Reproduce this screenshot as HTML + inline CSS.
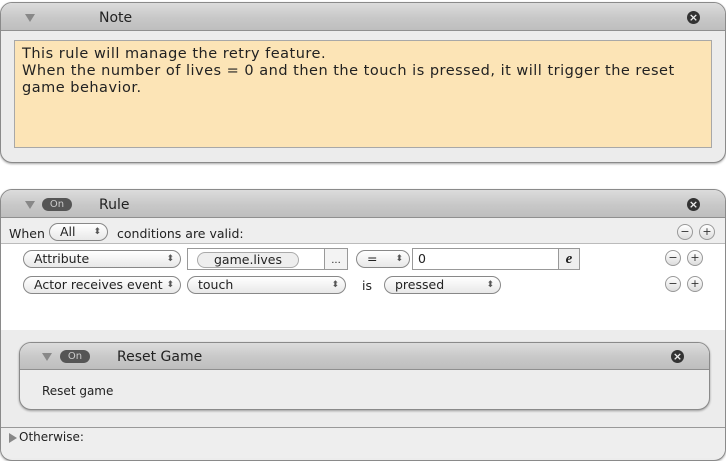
<!DOCTYPE html>
<html><head><style>
body{margin:0;width:726px;height:451px;background:#fff;font-family:"DejaVu Sans",sans-serif;font-size:12.5px;color:#222;position:relative;overflow:hidden}
.abs{position:absolute}
.panel{position:absolute;border:1px solid #8a8a8a;border-radius:12px;background:#ececec;box-shadow:0 1px 2px rgba(0,0,0,.35);overflow:hidden}
.hdr{position:absolute;left:0;right:0;top:0;height:27px;background:linear-gradient(#dcdcdc,#c8c8c8 55%,#bebebe);border-bottom:1px solid #8f8f8f}
.tri{position:absolute;width:0;height:0;border-left:5px solid transparent;border-right:5px solid transparent;border-top:8px solid #888}
.title{position:absolute;font-size:14px;color:#222}
.on{position:absolute;width:30px;height:13px;border-radius:7px;background:#555;color:#ccc;font-size:10px;text-align:center;line-height:13px}
.x{position:absolute;width:13px;height:13px;border-radius:50%;background:#333;color:#eee;font-size:11px;line-height:13px;text-align:center;font-weight:bold}
.pop{position:absolute;height:16px;border:1px solid #888;border-radius:9px;background:linear-gradient(#fff,#e8e8e8);font-size:12.5px;line-height:16px;padding-left:10px;box-sizing:content-box}
.pop:after{content:"⬍";position:absolute;right:6px;top:0;font-size:9px;color:#555}
.pm{position:absolute;width:14px;height:14px;border:1px solid #999;border-radius:50%;background:linear-gradient(#fff,#ddd);font-size:11px;line-height:14px;text-align:center;color:#333}
</style></head><body>

<div class="panel" style="left:0;top:2px;width:724px;height:159px">
 <div class="hdr"></div>
 <div class="tri" style="left:24px;top:11px"></div>
 <div class="title" style="left:98px;top:7px">Note</div>
 <div class="x" style="left:686px;top:8px">×</div>
 <div class="abs" style="left:13px;top:37px;width:698px;height:108px;background:#fce4b6;border:1px solid #a8a8a8;padding:5px 6px 0 7px;box-sizing:border-box;line-height:17px;font-size:14.5px;letter-spacing:0.5px">This rule will manage the retry feature.<br>When the number of lives = 0 and then the touch is pressed, it will trigger the reset game behavior.</div>
</div>

<div class="panel" style="left:0;top:189px;width:724px;height:270px">
 <div class="hdr"></div>
 <div class="tri" style="left:24px;top:11px"></div>
 <div class="on" style="left:41px;top:8px">On</div>
 <div class="title" style="left:98px;top:7px">Rule</div>
 <div class="x" style="left:686px;top:8px">×</div>
 <div class="abs" style="left:0;right:0;top:28px;height:25px;background:#eee;border-bottom:1px solid #bbb"></div>
 <div class="abs" style="left:8px;top:36px">When</div>
 <div class="pop" style="left:48px;top:33px;width:47px">All</div>
 <div class="abs" style="left:116px;top:36px">conditions are valid:</div>
 <div class="pm" style="left:676px;top:34px">−</div><div class="pm" style="left:698px;top:34px">+</div>
 <div class="abs" style="left:0;right:0;top:54px;height:86px;background:#fff"></div>
 <div class="pop" style="left:22px;top:60px;width:146px">Attribute</div>
 <div class="abs" style="left:186px;top:58px;width:159px;height:20px;background:#fff;border:1px solid #999"></div>
 <div class="abs" style="left:196px;top:62px;width:100px;height:14px;border:1px solid #aaa;border-radius:8px;background:#eee;text-align:center;font-size:12.5px;line-height:14px">game.lives</div>
 <div class="abs" style="left:323px;top:58px;width:22px;height:20px;border:1px solid #999;background:#f3f3f3;text-align:center;font-size:10px;line-height:24px">...</div>
 <div class="pop" style="left:355px;top:60px;width:42px">=</div>
 <div class="abs" style="left:411px;top:58px;width:146px;height:20px;background:#fff;border:1px solid #999;padding-left:5px;line-height:20px">0</div>
 <div class="abs" style="left:557px;top:58px;width:20px;height:20px;border:1px solid #999;background:#eee;text-align:center;font:bold italic 15px 'Liberation Serif',serif;line-height:20px">e</div>
 <div class="pm" style="left:664px;top:60px">−</div><div class="pm" style="left:686px;top:60px">+</div>
 <div class="pop" style="left:22px;top:86px;width:146px">Actor receives event</div>
 <div class="pop" style="left:186px;top:86px;width:147px">touch</div>
 <div class="abs" style="left:361px;top:88px">is</div>
 <div class="pop" style="left:383px;top:86px;width:105px">pressed</div>
 <div class="pm" style="left:664px;top:86px">−</div><div class="pm" style="left:686px;top:86px">+</div>

 <div class="panel" style="left:18px;top:152px;width:689px;height:66px;background:#ededed">
  <div class="hdr" style="height:26px"></div>
  <div class="tri" style="left:22px;top:10px"></div>
  <div class="on" style="left:40px;top:7px">On</div>
  <div class="title" style="left:97px;top:6px">Reset Game</div>
  <div class="x" style="left:651px;top:7px">×</div>
  <div class="abs" style="left:22px;top:41px;font-size:12px">Reset game</div>
 </div>
 <div class="abs" style="left:0;right:0;top:237px;height:30px;border-top:1px solid #999;background:#eee"></div>
 <div class="abs" style="left:8px;top:243px;width:0;height:0;border-top:5px solid transparent;border-bottom:5px solid transparent;border-left:8px solid #888"></div>
 <div class="abs" style="left:18px;top:240px;font-size:12px">Otherwise:</div>
</div>
</body></html>
